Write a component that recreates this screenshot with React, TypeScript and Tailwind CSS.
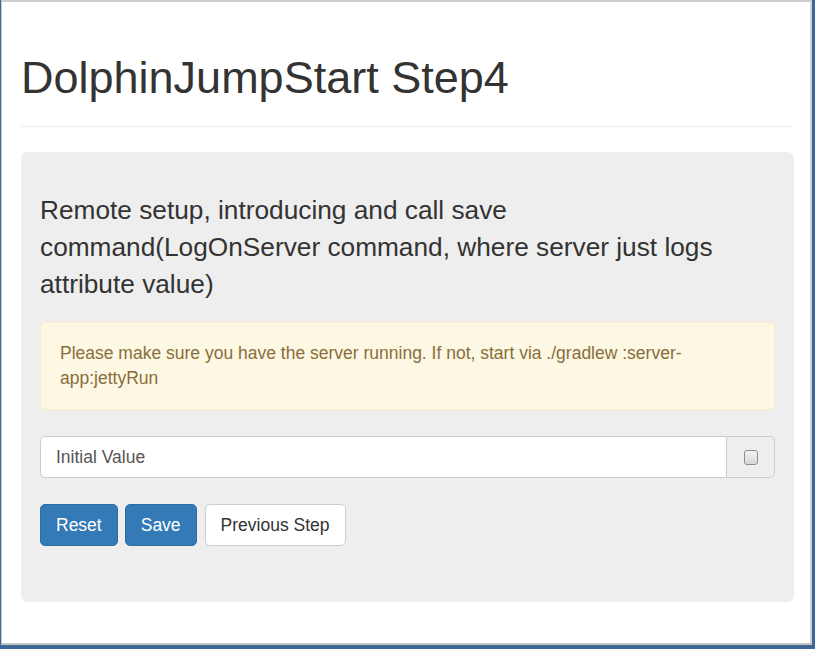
import { useState } from 'react';

export default function App() {
  const [value, setValue] = useState('Initial Value');
  const [checked, setChecked] = useState(false);

  return (
    <div className="h-[649px] w-[815px] bg-[#3b6896] pb-[4px] pl-[1px] pr-[3px] font-['Liberation_Sans',Arial,sans-serif] text-[#333]">
      <div className="h-full border-b-2 border-l border-r-2 border-t-2 border-b-[#c4c4c4] border-l-[#c9cdd2] border-r-[#d2d2d2] border-t-[#cdcdcd] bg-white pl-[19px] pr-[16px]">
        <div className="border-b border-[#eee] pb-[11px]">
          <h1 className="mb-[12.5px] mt-[51px] text-[45px] font-normal leading-[49.5px]">
            DolphinJumpStart Step4
          </h1>
        </div>

        <div className="mt-[25px] rounded-[7px] bg-[#eee] px-[19px] pb-[56px] pt-[40px]">
          <p className="mb-[20px] text-[26.25px] leading-[36.75px]">
            Remote setup, introducing and call save command(LogOnServer command, where server just
            logs attribute value)
          </p>

          <div className="mb-[26px] rounded-[5px] border border-[#faebcc] bg-[#fcf8e3] px-[19px] py-[18px] text-[17.5px] leading-[25px] text-[#8a6d3b]">
            Please make sure you have the server running. If not, start via ./gradlew :server-app:jettyRun
          </div>

          <div className="flex h-[42px]">
            <input
              value={value}
              onChange={(e) => setValue(e.target.value)}
              className="min-w-0 flex-1 rounded-l-[5px] border border-[#ccc] bg-white px-[15px] text-[17.5px] text-[#555] outline-none"
            />
            <label className="flex w-[48px] cursor-pointer items-center justify-center rounded-r-[5px] border border-l-0 border-[#ccc] bg-[#eee]">
              <input
                type="checkbox"
                checked={checked}
                onChange={(e) => setChecked(e.target.checked)}
                className="sr-only"
              />
              <span className="flex h-[15px] w-[14px] items-center justify-center rounded-[3px] border border-[#8f8f8f] bg-gradient-to-b from-[#f2f2f2] to-[#d8d8d8] text-[11px] leading-none text-[#333]">
                {checked ? '✓' : ''}
              </span>
            </label>
          </div>

          <div className="mt-[26px] flex gap-[7px] text-[17.5px] leading-[25px]">
            <button className="rounded-[5px] border border-[#2e6da4] bg-[#337ab7] px-[15px] py-[7.5px] text-white">
              Reset
            </button>
            <button className="rounded-[5px] border border-[#2e6da4] bg-[#337ab7] px-[15px] py-[7.5px] text-white">
              Save
            </button>
            <button className="ml-[1px] rounded-[5px] border border-[#ccc] bg-white px-[15px] py-[7.5px] text-[#333]">
              Previous Step
            </button>
          </div>
        </div>
      </div>
    </div>
  );
}
